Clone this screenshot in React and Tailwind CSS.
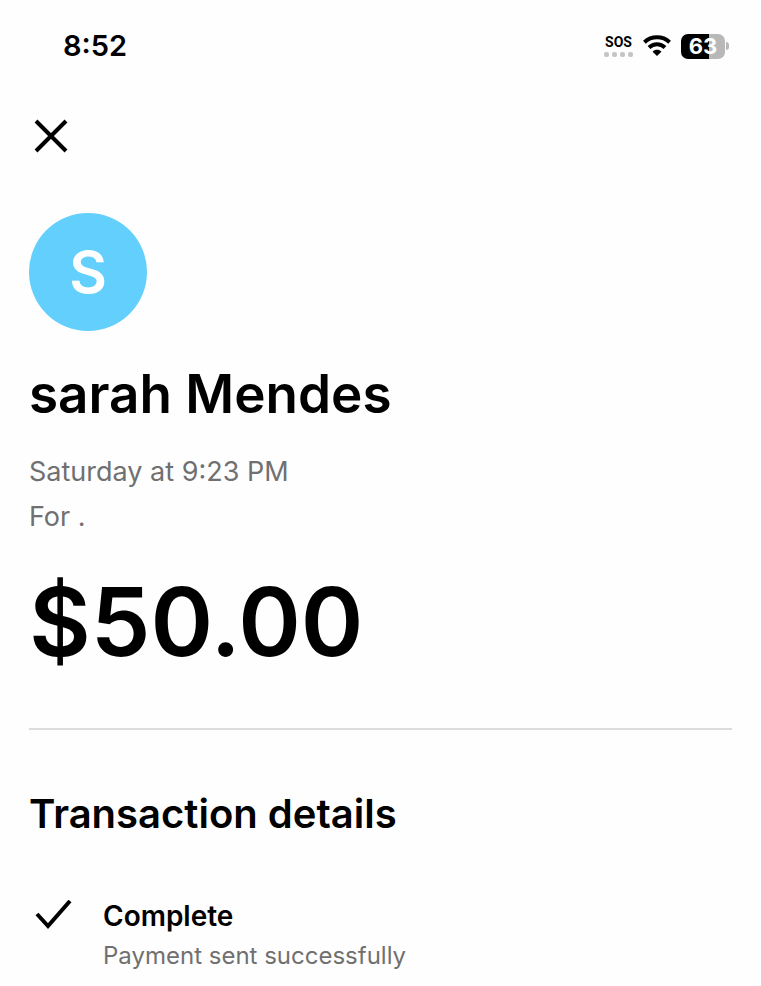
import React from 'react';

function SignalStatus() {
  return (
    <div className="flex flex-col items-center gap-[3px]">
      <span className="font-['Roboto',sans-serif] text-[14px] leading-[14px] font-bold">SOS</span>
      <span className="flex gap-[3px]">
        <span className="h-[5px] w-[5px] rounded-[2px] bg-[#c4c4c4]" />
        <span className="h-[5px] w-[5px] rounded-[2px] bg-[#c4c4c4]" />
        <span className="h-[5px] w-[5px] rounded-[2px] bg-[#c4c4c4]" />
        <span className="h-[5px] w-[5px] rounded-[2px] bg-[#c4c4c4]" />
      </span>
    </div>
  );
}

function WifiIcon() {
  return (
    <svg className="h-[22px] w-[28px]" viewBox="0 0 28 22" fill="none" stroke="#000" strokeWidth="4" aria-label="Wi-Fi">
      <path d="M1.4 7.2C8.4 .7 19.6 .7 26.6 7.2" />
      <path d="M6 12.5C10.6 8.1 17.4 8.1 22 12.5" />
      <path d="M14 21L9.6 16.7C12 14.2 16 14.2 18.4 16.7Z" fill="#000" stroke="none" />
    </svg>
  );
}

function Battery() {
  return (
    <div className="flex items-center gap-px">
      <div className="flex h-[25px] w-[44px] items-center justify-center rounded-[7px] bg-linear-to-r from-black from-63% to-[#b8b8b8] to-63% text-[22px] leading-none font-bold text-white">
        63
      </div>
      <span className="h-2 w-[3px] rounded-r-full bg-[#b8b8b8]" />
    </div>
  );
}

function App() {
  return (
    <div className="min-h-screen bg-[#fefefe] font-['Inter',sans-serif] text-black">
      <header className="flex h-[92px] items-center justify-between pr-8 pl-[63px]">
        <time className="text-[29px] leading-8 font-semibold">8:52</time>
        <div className="flex items-center gap-[10px]">
          <SignalStatus />
          <WifiIcon />
          <Battery />
        </div>
      </header>

      <main className="px-[29px] pb-3">
        <button type="button" aria-label="Close" className="flex h-[88px] w-11 items-center justify-center">
          <svg className="h-9 w-9" viewBox="0 0 36 36" fill="none" stroke="#000" strokeWidth="4">
            <path d="M3 3L33 33M33 3L3 33" />
          </svg>
        </button>

        <section className="pt-[33px]">
          <div className="flex h-[118px] w-[118px] items-center justify-center rounded-full bg-[#62cffc] text-[58px] leading-none font-semibold text-white">
            S
          </div>
          <h1 className="mt-7 text-[53px] leading-[70px] font-semibold">sarah Mendes</h1>
          <div className="mt-5 text-[27px] leading-[45px] text-[#707070]">
            <p>Saturday at 9:23 PM</p>
            <p>For .</p>
          </div>
          <p className="mt-5 text-[95px] leading-[125px] font-semibold">$50.00</p>
        </section>

        <hr className="mt-11 border-t-2 border-[#dcdcdc]" />

        <section className="pt-14">
          <h2 className="text-[40px] leading-[56px] font-semibold">Transaction details</h2>
          <div className="mt-[54px] flex">
            <svg className="mt-1 h-[30px] w-[74px]" viewBox="0 0 74 30" fill="none" stroke="#000" strokeWidth="4" aria-hidden="true">
              <path d="M8 14L19 26L41 1" />
            </svg>
            <div>
              <h3 className="text-[28px] leading-10 font-semibold">Complete</h3>
              <p className="text-[24px] leading-10 text-[#707070]">Payment sent successfully</p>
            </div>
          </div>
        </section>
      </main>
    </div>
  );
}

export default App;
